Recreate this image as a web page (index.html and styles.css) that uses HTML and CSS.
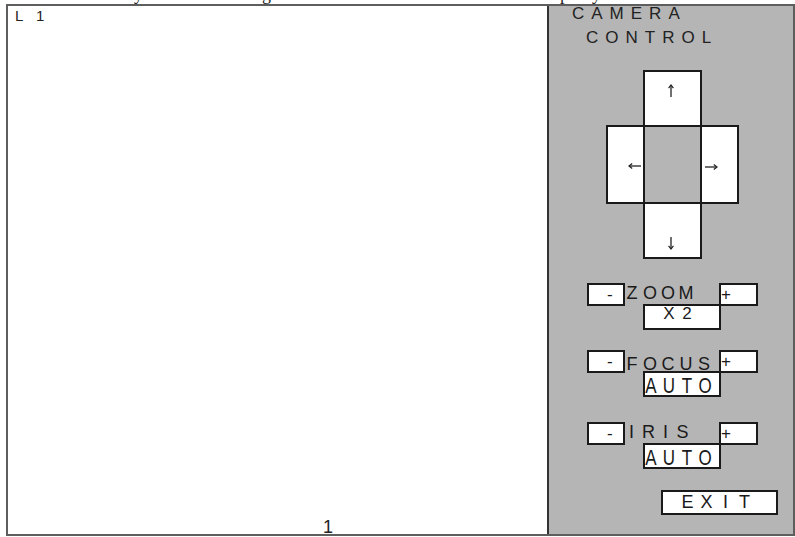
FILE: index.html
```html
<!DOCTYPE html>
<html>
<head>
<meta charset="utf-8">
<title>Camera Control</title>
<link rel="stylesheet" href="styles.css">
</head>
<body>
<div class="caption"><div class="caption-text"><span class="c1">y</span><span class="c2">g</span><span class="c3">p</span><span class="c4">y</span></div></div>
<div class="frame">
  <div class="view">
    <div class="view-id">L 1</div>
    <div class="view-num">1</div>
  </div>
  <div class="panel">
    <div class="title t1">CAMERA</div>
    <div class="title t2">CONTROL</div>
    <div class="dpad">
      <div class="pad up"><svg class="arrow" width="8" height="13" viewBox="0 0 8 13"><path d="M4 1.5V13" stroke="#222" stroke-width="1.3" fill="none"/><path d="M1.6 4.2L4 1L6.4 4.2" stroke="#222" stroke-width="1.2" fill="none"/></svg></div>
      <div class="pad left"><svg class="arrow" width="13" height="8" viewBox="0 0 13 8"><path d="M1.5 4H13" stroke="#222" stroke-width="1.3" fill="none"/><path d="M4.2 1.6L1 4L4.2 6.4" stroke="#222" stroke-width="1.2" fill="none"/></svg></div>
      <div class="pad right"><svg class="arrow" width="13" height="8" viewBox="0 0 13 8"><path d="M0 4H11.5" stroke="#222" stroke-width="1.3" fill="none"/><path d="M8.8 1.6L12 4L8.8 6.4" stroke="#222" stroke-width="1.2" fill="none"/></svg></div>
      <div class="pad down"><svg class="arrow" width="8" height="13" viewBox="0 0 8 13"><path d="M4 0V11.5" stroke="#222" stroke-width="1.3" fill="none"/><path d="M1.6 8.8L4 12L6.4 8.8" stroke="#222" stroke-width="1.2" fill="none"/></svg></div>
    </div>

    <div class="group g-zoom">
      <div class="row">
        <div class="btn minus">-</div>
        <div class="label"><span class="ch">Z</span><span class="ch">O</span><span class="ch">O</span><span class="ch">M</span></div>
        <div class="btn plus">+</div>
      </div>
      <div class="value"><div class="vtext"><span class="ch">&nbsp;</span><span class="ch">X</span><span class="ch">2</span></div></div>
    </div>

    <div class="group g-focus">
      <div class="row">
        <div class="btn minus">-</div>
        <div class="label label-low"><span class="ch">F</span><span class="ch">O</span><span class="ch">C</span><span class="ch">U</span><span class="ch">S</span></div>
        <div class="btn plus">+</div>
      </div>
      <div class="value"><div class="vtext tall"><span class="ch">A</span><span class="ch">U</span><span class="ch">T</span><span class="ch">O</span></div></div>
    </div>

    <div class="group g-iris">
      <div class="row">
        <div class="btn minus">-</div>
        <div class="label label-narrow"><span class="ch">I</span><span class="ch">R</span><span class="ch">I</span><span class="ch">S</span></div>
        <div class="btn plus">+</div>
      </div>
      <div class="value"><div class="vtext tall"><span class="ch">A</span><span class="ch">U</span><span class="ch">T</span><span class="ch">O</span></div></div>
    </div>

    <div class="exit"><span class="ch">E</span><span class="ch">X</span><span class="ch">I</span><span class="ch">T</span></div>
  </div>
</div>
</body>
</html>
```
FILE: styles.css
```css
body {
  margin: 0;
  background: #ffffff;
  font-family: "Liberation Sans", Arial, sans-serif;
  color: #1a1a1a;
}

/* clipped caption line above the frame */
.caption {
  height: 4px;
  overflow: hidden;
}
.caption-text {
  display: flex;
  margin-top: -15px;
  font: 18px/18px "Liberation Serif", "Times New Roman", serif;
  color: #222;
}
.caption-text span {
  flex: none;
  width: 10px;
}
.c1 { margin-left: 134px; }
.c2 { margin-left: 118px; }
.c3 { margin-left: 288px; }
.c4 { margin-left: 22px; }

/* main frame */
.frame {
  display: flex;
  margin-left: 6px;
  width: 789px;
  height: 532px;
  box-sizing: border-box;
  border: 2px solid #5e5e5e;
}

.view {
  width: 541px;
  flex: none;
  box-sizing: border-box;
  border-right: 2px solid #333;
  display: flex;
  flex-direction: column;
  justify-content: space-between;
  padding: 1px 0 0 7px;
  background: #fff;
}
.view-id {
  font-size: 15px;
  line-height: 17px;
  letter-spacing: 4.5px;
  color: #222;
}
.view-num {
  font-size: 18px;
  line-height: 16px;
  padding-left: 308px;
  margin-bottom: -1px;
  color: #222;
}

/* control panel */
.panel {
  flex: 1;
  background: #b5b5b5;
  display: flex;
  flex-direction: column;
  align-items: flex-start;
}
.title {
  font-size: 17px;
  line-height: 16px;
  letter-spacing: 7px;
  color: #222;
}
.t1 { margin-left: 23px; }
.t2 { margin-left: 37px; margin-top: 8px; }

/* direction pad */
.dpad {
  display: grid;
  grid-template-columns: 37px 57px 37px;
  grid-template-rows: 55px 77px 55px;
  margin: 24px 0 0 57px;
}
.pad {
  background: #fff;
  border: 2px solid #1a1a1a;
  margin: 0 -2px -2px 0;
  display: flex;
  align-items: flex-start;
}
.arrow { display: block; }
.up { grid-column: 2; grid-row: 1; padding: 12px 0 0 22px; }
.left { grid-column: 1; grid-row: 2; padding: 35px 0 0 20px; }
.right { grid-column: 3; grid-row: 2; padding: 36px 0 0 3px; }
.down { grid-column: 2; grid-row: 3; padding: 33px 0 0 22px; }

/* zoom / focus / iris groups */
.group {
  margin: 26px 0 0 38px;
  display: flex;
  flex-direction: column;
  align-items: flex-start;
}
.g-focus { margin-top: 20px; }
.g-iris { margin-top: 25px; }

.row {
  display: flex;
  align-items: flex-start;
  width: 171px;
  height: 23px;
}
.btn {
  height: 23px;
  box-sizing: border-box;
  border: 2px solid #1a1a1a;
  background: #fff;
  font-size: 17px;
  line-height: 19px;
  flex: none;
}
.minus { width: 38px; padding-left: 18px; }
.plus { width: 39px; margin-left: auto; }

.label {
  display: flex;
  margin-left: -2px;
  font-size: 18px;
  line-height: 20px;
  color: #1a1a1a;
}
.label-low { padding-top: 4px; }

.ch {
  flex: none;
  width: 18px;
  text-align: center;
}
.label-narrow .ch { width: 17px; }

.value {
  margin: -2px 0 0 56px;
  width: 78px;
  height: 26px;
  box-sizing: border-box;
  border: 2px solid #1a1a1a;
  background: #fff;
  display: flex;
  align-items: flex-start;
  font-size: 17px;
  line-height: 20px;
}
.vtext {
  display: flex;
  margin: -2px 0 0 -3px;
}
.vtext.tall {
  margin-top: 5px;
  transform: scaleY(1.35);
  transform-origin: 50% 15.9px;
}

.exit {
  margin: 21px 0 0 112px;
  width: 117px;
  height: 25px;
  box-sizing: border-box;
  border: 2px solid #1a1a1a;
  background: #fff;
  padding-left: 15px;
  display: flex;
  align-items: flex-start;
  font-size: 18px;
  line-height: 20px;
}
.exit .ch { width: 19px; }
```
